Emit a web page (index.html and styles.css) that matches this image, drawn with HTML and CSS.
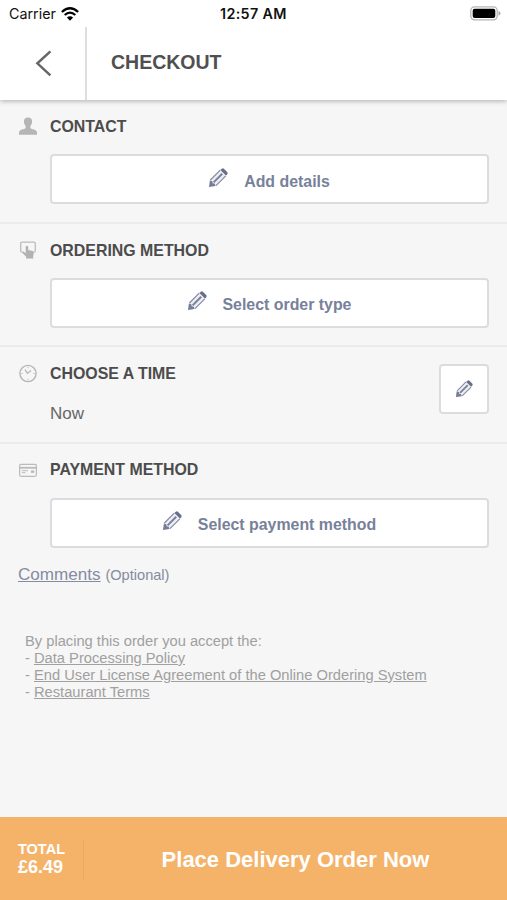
FILE: index.html
```html
<!DOCTYPE html>
<html lang="en">
<head>
<meta charset="utf-8">
<title>Checkout</title>
<link rel="stylesheet" href="styles.css">
</head>
<body>
<svg class="defs" width="0" height="0" aria-hidden="true">
  <symbol id="pencil" viewBox="0 0 20 20">
    <path d="M1 19 2.2 12.2 12.2 2.2 17.8 7.8 7.8 17.8Z" fill="#eceef5"/>
    <path d="M2.4 12 12.2 2.2M8 17.6 17.8 7.8" stroke="#858aa2" stroke-width="1.2" fill="none"/>
    <path d="M5.6 14.4 14.2 5.8" stroke="#7b8099" stroke-width="2"/>
    <path d="M1.9 12.5 4.3 13.2 4.7 15.3 6.8 15.7 7.5 18.1 1 19Z" fill="#777d96"/>
    <path d="M12.4 2.1 13.8.8Q15-.1 16.1.9L19.1 3.9Q20.1 5 19.2 6.2L17.9 7.6Z" fill="#696f88"/>
  </symbol>
</svg>
<div class="status">
  <span class="carrier">Carrier</span>
  <svg class="wifi" width="18" height="14" viewBox="0 0 18 14" fill="none" stroke="#000" stroke-width="2.3"><path d="M.9 5Q9-2.4 17.1 5M3.7 8Q9 3.2 14.3 8"/><path d="M9 13.7 5.9 10.5Q9 8 12.1 10.5Z" fill="#000" stroke="none"/></svg>
  <span class="clock">12:57 AM</span>
  <svg class="battery" width="31" height="15" viewBox="0 0 31 15"><rect x=".8" y=".8" width="26.4" height="13" rx="3.8" fill="#fff" stroke="#b5b5b5" stroke-width="1.3"/><rect x="2.7" y="2.7" width="22.6" height="9.2" rx="2" fill="#000"/><path d="M28.5 5Q30.5 5.5 30.5 7.3T28.5 9.7Z" fill="#aaa"/></svg>
</div>
<header class="header">
  <div class="back"><svg width="18" height="28" viewBox="0 0 18 28" fill="none" stroke="#666" stroke-width="2.5"><path d="M16.4 2.3 3.4 14.3 16.4 26.3"/></svg></div>
  <h1>CHECKOUT</h1>
</header>
<main>
  <section class="row">
    <svg class="icon" width="20" height="20" viewBox="0 0 20 20" fill="#b5b5b5"><path d="M10 1.4C7 1.4 5.6 3.4 5.9 6 6.1 7.6 6.8 9 7.6 10V12.2C6.5 13.2 1 13.3 1 16.4V18.8H19V16.4C19 13.3 13.5 13.2 12.4 12.2V10C13.2 9 13.9 7.6 14.1 6 14.4 3.4 13 1.4 10 1.4Z"/></svg>
    <div class="body"><h2>CONTACT</h2>
    <button class="btn"><svg class="pen"><use href="#pencil"/></svg><span>Add details</span></button></div>
  </section>
  <section class="row">
    <svg class="icon" width="20" height="20" viewBox="0 0 20 20"><path d="M6 12.2H4.2Q2.7 12.2 2.7 10.7V3.7Q2.7 2.2 4.2 2.2H15.8Q17.3 2.2 17.3 3.7V10.7Q17.3 12.2 15.8 12.2" fill="none" stroke="#bbb" stroke-width="1.3"/><path d="M7.7 6.5Q9.3 5.1 10.2 6.8V10.1L14.6 11Q16 11.3 15.8 13L15.2 16V18.5H8V16.5L4.5 13.2Q4.8 11.7 6.4 12.3L7.7 13Z" fill="#b2b2b2"/></svg>
    <div class="body"><h2>ORDERING METHOD</h2>
    <button class="btn"><svg class="pen"><use href="#pencil"/></svg><span>Select order type</span></button></div>
  </section>
  <section class="row time">
    <svg class="icon" width="20" height="20" viewBox="0 0 20 20" fill="none" stroke="#b5b5b5"><circle cx="10" cy="10.5" r="8.1" stroke-width="1.4"/><path d="M7 6.6 9.5 10.4 13 7.4" stroke-width="1.3"/><path d="M10 3.8V5.3M10 15.7V17.2M3.3 10.5H4.8M15.2 10.5H16.7" stroke-width=".8"/></svg>
    <div class="body"><h2>CHOOSE A TIME</h2><p>Now</p></div>
    <button class="btn edit"><svg class="pen"><use href="#pencil"/></svg></button>
  </section>
  <section class="row pay">
    <svg class="icon" width="20" height="20" viewBox="0 0 20 20"><rect x="1.6" y="4.3" width="16.8" height="12" rx="1.5" fill="none" stroke="#bbb" stroke-width="1.2"/><path d="M2 7.8H18" stroke="#bbb" stroke-width="1.8"/><path d="M3.8 10.7H10M3.8 12.7H7.5" stroke="#bbb"/><rect x="13" y="10.5" width="3.2" height="2.3" fill="#b5b5b5"/></svg>
    <div class="body"><h2>PAYMENT METHOD</h2>
    <button class="btn"><svg class="pen"><use href="#pencil"/></svg><span>Select payment method</span></button></div>
  </section>
  <div class="comments"><a>Comments</a> <small>(Optional)</small></div>
  <div class="legal">By placing this order you accept the:<br>- <a>Data Processing Policy</a><br>- <a>End User License Agreement of the Online Ordering System</a><br>- <a>Restaurant Terms</a></div>
</main>
<footer class="footer">
  <div class="total"><span>TOTAL</span><b>£6.49</b></div>
  <div class="place"><span>Place Delivery Order Now</span></div>
</footer>
</body>
</html>
```
FILE: styles.css
```css
* { box-sizing: border-box; }
body { margin: 0; height: 900px; display: flex; flex-direction: column; background: #f6f6f6; font-family: "Liberation Sans", Arial, sans-serif; color: #4a4a4a; overflow: hidden; }
h1, h2, p { margin: 0; }
svg { flex: none; display: block; }
.defs { position: absolute; }
.status { position: relative; z-index: 1; height: 27px; flex: none; display: grid; grid-template-columns: 52px 159px 1fr 31px; align-items: center; padding: 0 6px 0 9px; background: #fff; color: #111; font: 14.3px/27px Inter, sans-serif; }
.wifi { justify-self: start; }
.clock { font-weight: 600; letter-spacing: .35px; }
.header { height: 73px; flex: none; display: flex; background: #fff; box-shadow: 0 1px 5px rgba(0,0,0,.3); }
.back { width: 87px; border-right: 2px solid #dedede; padding: 22px 0 0 34px; }
h1 { font-size: 19.5px; line-height: 71px; padding-left: 24px; color: #505050; }
main { flex: 1; }
.row { display: flex; height: 123.5px; padding: 16px 18px 0; border-bottom: 2px solid #ebebeb; }
.icon { margin-right: 12px; }
.body { flex: 1; }
h2 { font-size: 15.9px; line-height: 21px; color: #4c4c4c; white-space: nowrap; }
.btn { width: 100%; height: 50px; margin: 17px 0 0; padding: 0; border: 2px solid #dadcdf; border-radius: 4px; background: #fff; display: flex; justify-content: center; align-items: center; color: #78819a; font: bold 15.9px/24px "Liberation Sans", Arial, sans-serif; }
.btn span { padding-top: 5px; margin-right: 1px; }
.pen { width: 20px; height: 20px; margin: -3px 16px 0 0; }
.time { height: 96.5px; }
.time p { font-size: 17px; line-height: 24px; margin-top: 18px; color: #666; }
.btn.edit { width: 50px; margin: 1px 0 0; }
.edit .pen { width: 18px; height: 18px; margin: 0; }
.pay { height: 119px; border: 0; }
.pay h2 { line-height: 20px; }
.pay .btn { margin-top: 18px; }
.comments { height: 24px; padding-left: 18px; font-size: 17.1px; line-height: 24px; color: #858ba0; }
.comments a, .legal a { text-decoration: underline; }
.comments small { font-size: 14.6px; }
.legal { margin: 46px 25px 0; font-size: 14.7px; line-height: 17px; color: #a0a0a0; white-space: nowrap; }
.footer { height: 83px; flex: none; display: flex; align-items: center; background: #f5b369; color: #fff; font-weight: bold; }
.total { width: 84px; height: 40px; padding-left: 18px; border-right: 1px solid #edaa61; display: flex; flex-direction: column; margin-top: 3px; }
.total span { font-size: 14.5px; line-height: 18px; }
.total b { font-size: 18px; line-height: 19px; }
.place { flex: 1; text-align: center; font-size: 22px; padding-top: 2px; }
```
